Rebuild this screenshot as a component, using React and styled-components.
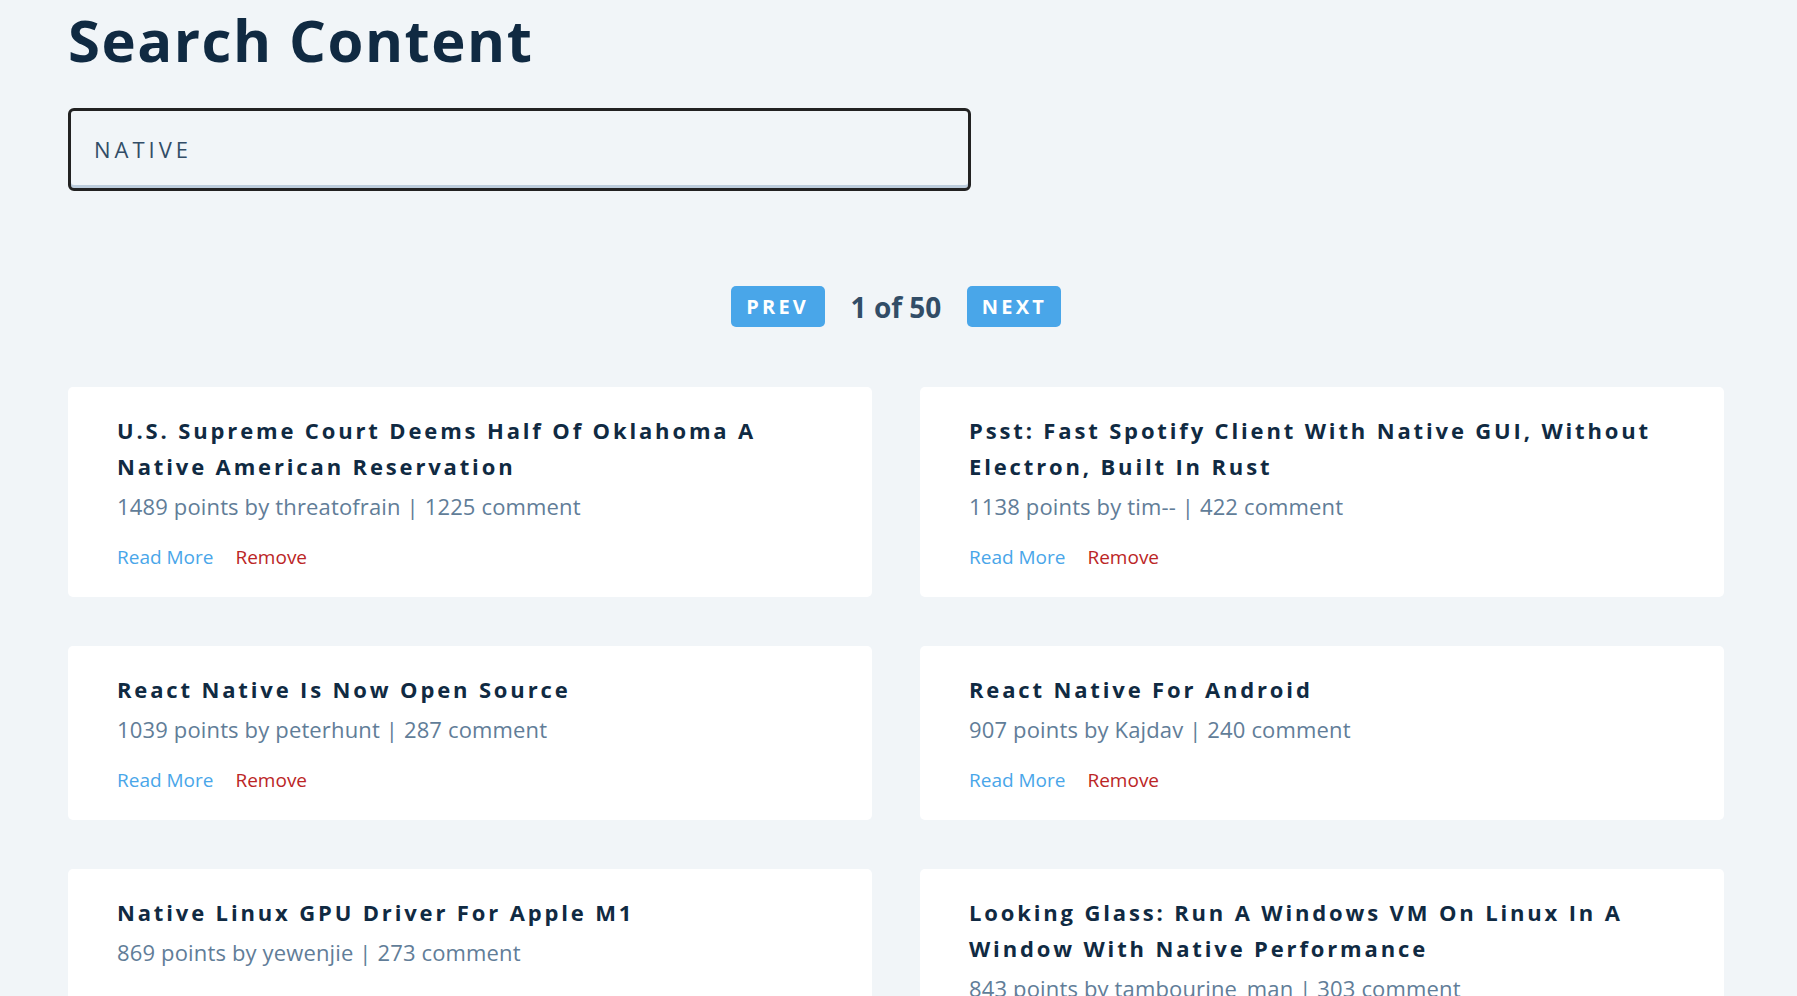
import React from 'react';
import styled, { createGlobalStyle } from 'styled-components';

const GlobalStyle = createGlobalStyle`
  * { box-sizing: border-box; }
  body {
    margin: 0;
    background: #f1f5f8;
    color: #102a42;
    font-family: "Open Sans", "Noto Sans", sans-serif;
  }
`;

const Page = styled.main`
  padding: 0 73px 60px 68px;
`;

const SearchForm = styled.form`
  padding-top: 4px;
`;

const Title = styled.h1`
  margin: 0;
  font-size: 58px;
  line-height: 72px;
  letter-spacing: 1.5px;
  font-weight: 700;
  color: #102a42;
`;

const SearchInput = styled.input`
  display: block;
  margin-top: 32px;
  width: 903px;
  height: 83px;
  padding: 0 23px 2px;
  border: 3px solid #222;
  border-radius: 6px;
  box-shadow: inset 0 -3px 0 #bcccdc;
  background: #f1f5f8;
  color: #324d67;
  caret-color: #102a42;
  font-family: inherit;
  font-size: 22px;
  letter-spacing: 4px;
  text-transform: uppercase;
  outline: none;
`;

const Pagination = styled.div`
  display: flex;
  justify-content: center;
  align-items: center;
  gap: 26px;
  margin-top: 95px;
`;

const PageButton = styled.button`
  width: 94px;
  height: 41px;
  border: none;
  border-radius: 5px;
  background: #49a6e9;
  color: #fff;
  font-family: inherit;
  font-size: 20px;
  font-weight: 700;
  letter-spacing: 3.2px;
  text-transform: uppercase;
  cursor: pointer;
`;

const PageCount = styled.p`
  margin: 0;
  font-size: 28px;
  font-weight: 700;
  color: #324d67;
`;

const Stories = styled.section`
  display: grid;
  grid-template-columns: 1fr 1fr;
  gap: 49px 48px;
  margin-top: 60px;
`;

const Story = styled.article`
  background: #fff;
  border-radius: 5px;
  padding: 25px 48px 28px 49px;
`;

const StoryTitle = styled.h4`
  margin: 0;
  font-size: 22px;
  line-height: 36px;
  font-weight: 700;
  letter-spacing: 2.85px;
  color: #102a42;
`;

const StoryInfo = styled.p`
  margin: 6px 0 0;
  font-size: 22px;
  line-height: 32px;
  letter-spacing: 0.15px;
  color: #617d98;
`;

const Links = styled.div`
  display: flex;
  gap: 22px;
  margin-top: 23px;
`;

const StoryLink = styled.a`
  font-size: 19px;
  line-height: 24px;
  color: ${({ $danger }) => ($danger ? '#bb2525' : '#49a6e9')};
  text-decoration: none;
  cursor: pointer;
`;

const stories = [
  { title: 'U.S. Supreme Court Deems Half Of Oklahoma A Native American Reservation', points: 1489, author: 'threatofrain', comments: 1225 },
  { title: 'Psst: Fast Spotify Client With Native GUI, Without Electron, Built In Rust', points: 1138, author: 'tim--', comments: 422 },
  { title: 'React Native Is Now Open Source', points: 1039, author: 'peterhunt', comments: 287 },
  { title: 'React Native For Android', points: 907, author: 'Kajdav', comments: 240 },
  { title: 'Native Linux GPU Driver For Apple M1', points: 869, author: 'yewenjie', comments: 273 },
  { title: 'Looking Glass: Run A Windows VM On Linux In A Window With Native Performance', points: 843, author: 'tambourine_man', comments: 303 },
];

const App = () => {
  return (
    <>
      <GlobalStyle />
      <Page>
        <SearchForm onSubmit={(e) => e.preventDefault()}>
          <Title>Search Content</Title>
          <SearchInput type="text" defaultValue="NATIVE" autoFocus />
        </SearchForm>
        <Pagination>
          <PageButton>prev</PageButton>
          <PageCount>1 of 50</PageCount>
          <PageButton>next</PageButton>
        </Pagination>
        <Stories>
          {stories.map((s) => (
            <Story key={s.title}>
              <StoryTitle>{s.title}</StoryTitle>
              <StoryInfo>
                {s.points} points by {s.author} | {s.comments} comment
              </StoryInfo>
              <Links>
                <StoryLink>Read More</StoryLink>
                <StoryLink $danger>Remove</StoryLink>
              </Links>
            </Story>
          ))}
        </Stories>
      </Page>
    </>
  );
};

export default App;
